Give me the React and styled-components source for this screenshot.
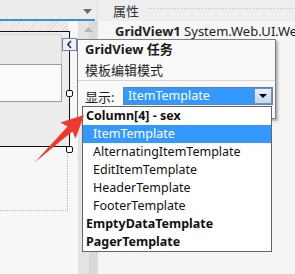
import React from 'react';
import styled, { createGlobalStyle } from 'styled-components';

const GlobalStyle = createGlobalStyle`
  html, body {
    margin: 0;
    padding: 0;
    background: #f0f0f0;
  }
  body {
    font-family: "Noto Sans", "Noto Sans CJK SC", sans-serif;
    font-size: 12.5px;
    color: #1e1e1e;
  }
`;

const templates = [
  { name: 'Column[4] - sex', bold: true },
  { name: 'ItemTemplate', selected: true },
  { name: 'AlternatingItemTemplate' },
  { name: 'EditItemTemplate' },
  { name: 'HeaderTemplate' },
  { name: 'FooterTemplate' },
  { name: 'EmptyDataTemplate', bold: true },
  { name: 'PagerTemplate', bold: true },
];

export default function App() {
  return (
    <Screen>
      <GlobalStyle />
      <DesignPane>
        <TabStrip>
          <svg width="9" height="5" viewBox="0 0 9 5">
            <path d="M0 0h9L4.5 5z" fill="#6b6b6b" />
          </svg>
        </TabStrip>
        <BlueBar />
        <DesignBody>
          <Surface>
            <Hatch />
            <ControlBox>
              <HeaderBand />
              <Cell />
              <Handle top={58} />
              <Handle top={114} />
            </ControlBox>
            <DottedBox />
          </Surface>
          <ScrollBar>
            <svg width="9" height="5" viewBox="0 0 9 5">
              <path d="M0 5h9L4.5 0z" fill="#b4b4b4" />
            </svg>
          </ScrollBar>
        </DesignBody>
      </DesignPane>

      <PropsPane>
        <PropsHeader>
          <span>属性</span>
          <Gripper />
        </PropsHeader>
        <ObjectRow>
          <b>GridView1</b>&nbsp;System.Web.UI.WebC
        </ObjectRow>
        <PropsBody />
      </PropsPane>

      <SmartTag>
        <svg width="7" height="9" viewBox="0 0 7 9">
          <path d="M5 1L1.8 4.5L5 8" stroke="#222" strokeWidth="1.4" fill="none" />
        </svg>
      </SmartTag>

      <TaskPanel>
        <PanelTitle>GridView 任务</PanelTitle>
        <PanelText>模板编辑模式</PanelText>
        <Separator />
        <ShowRow>
          <Label>显示:</Label>
          <Combo>
            <ComboValue>ItemTemplate</ComboValue>
            <ComboButton>
              <svg width="8" height="4" viewBox="0 0 8 4">
                <path d="M0 0h8L4 4z" fill="#000" />
              </svg>
            </ComboButton>
          </Combo>
        </ShowRow>
      </TaskPanel>

      <TemplateList>
        {templates.map((t) => (
          <ListItem key={t.name} bold={t.bold} selected={t.selected}>
            {t.name}
          </ListItem>
        ))}
      </TemplateList>

      <Arrow width="295" height="274" viewBox="0 0 295 274">
        <path
          d="M84 115L60.4 122.6L67.6 126.6L34.5 162.5L72.4 131.4L75.6 138.4Z"
          fill="#ec3a2e"
        />
      </Arrow>
    </Screen>
  );
}

const Screen = styled.div`
  position: relative;
  width: 295px;
  height: 274px;
  overflow: hidden;
  display: flex;
  background: #f0f0f0;
`;

const DesignPane = styled.div`
  width: 97px;
  display: flex;
  flex-direction: column;
  background: #f2f2f2;
`;

const TabStrip = styled.div`
  height: 19px;
  display: flex;
  align-items: center;
  justify-content: flex-end;
  padding: 3px 5px 0 0;
  box-sizing: border-box;
  background: #ededed;
`;

const BlueBar = styled.div`
  height: 2px;
  background: #3c8edc;
  margin-right: 2px;
`;

const DesignBody = styled.div`
  flex: 1;
  display: flex;
`;

const Surface = styled.div`
  width: 78px;
  display: flex;
  flex-direction: column;
  background: #f7f7f7;
`;

const Hatch = styled.div`
  height: 10px;
  margin-right: 10px;
  background: repeating-linear-gradient(
    135deg,
    #f3eeee 0 2px,
    #e6d9d9 2px 3px
  );
`;

const ControlBox = styled.div`
  position: relative;
  width: 70px;
  height: 116px;
  box-sizing: border-box;
  border-top: 1px solid #111;
  border-right: 1px solid #111;
  border-bottom: 1px solid #111;
  background: #ececec;
  display: flex;
  flex-direction: column;
`;

const HeaderBand = styled.div`
  height: 30px;
  width: 62px;
  box-sizing: border-box;
  margin-top: 2px;
  border-top: 1px solid #d4d4d4;
  border-right: 1px solid #c8c8c8;
  background: #ebebeb;
`;

const Cell = styled.div`
  width: 62px;
  height: 38px;
  box-sizing: border-box;
  border-top: 1px solid #9a9a9a;
  border-right: 1px solid #9a9a9a;
  border-bottom: 1px solid #9a9a9a;
  background: #fbfbfb;
`;

const Handle = styled.div`
  position: absolute;
  right: -4px;
  top: ${(p) => p.top}px;
  width: 5px;
  height: 5px;
  border: 1px solid #111;
  border-radius: 2px;
  background: #fff;
`;

const DottedBox = styled.div`
  width: 68px;
  height: 64px;
  box-sizing: border-box;
  border-right: 1px dotted #bdbdbd;
  border-bottom: 1px dotted #bdbdbd;
`;

const ScrollBar = styled.div`
  flex: 1;
  display: flex;
  justify-content: center;
  padding-top: 6px;
  background: linear-gradient(90deg, #e4e4e4 0 55%, #d9d9d9 55% 100%);
  border-left: 1px solid #e0e0e0;
`;

const PropsPane = styled.div`
  flex: 1;
  min-width: 0;
  display: flex;
  flex-direction: column;
  background: #f3f3f3;
  border-left: 1px solid #dcdcdc;
`;

const PropsHeader = styled.div`
  height: 21px;
  display: flex;
  align-items: center;
  gap: 8px;
  padding: 0 0 0 15px;
  font-size: 13px;
  color: #333;
  background: #eeeef0;
`;

const Gripper = styled.div`
  flex: 1;
  height: 4px;
  margin-top: -3px;
  background-image: radial-gradient(#b8b8b8 0.6px, transparent 0.8px);
  background-size: 3px 3px;
`;

const ObjectRow = styled.div`
  height: 21px;
  padding-left: 17px;
  white-space: nowrap;
  overflow: hidden;
  font-size: 13px;
  line-height: 21px;
  color: #222;
  background: #f6f6f6;
`;

const PropsBody = styled.div`
  flex: 1;
  background: #f4f4f4;
`;

const SmartTag = styled.div`
  position: absolute;
  left: 62px;
  top: 38px;
  width: 13px;
  height: 11px;
  display: flex;
  align-items: center;
  justify-content: center;
  border: 1px solid #6f7fae;
  background: #eef0f7;
`;

const TaskPanel = styled.div`
  position: absolute;
  left: 77px;
  top: 39px;
  width: 199px;
  height: 80px;
  box-sizing: border-box;
  padding: 0 0 0 7px;
  border: 1px solid #7d7d7d;
  background: #f9f9f9;
  box-shadow: 2px 2px 2px rgba(0, 0, 0, 0.28);
  display: flex;
  flex-direction: column;
`;

const PanelTitle = styled.div`
  height: 18px;
  line-height: 18px;
  font-weight: bold;
  font-size: 13px;
  color: #1a1a1a;
`;

const PanelText = styled.div`
  height: 18px;
  line-height: 18px;
  margin-top: 3px;
  font-size: 13px;
`;

const Separator = styled.div`
  height: 1px;
  margin: 1px 0 0 -7px;
  background: #d8d8d8;
`;

const ShowRow = styled.div`
  display: flex;
  align-items: center;
  margin-top: 6px;
  height: 18px;
`;

const Label = styled.div`
  width: 38px;
  font-size: 13px;
`;

const Combo = styled.div`
  width: 150px;
  height: 18px;
  box-sizing: border-box;
  border: 1px solid #5b86c6;
  background: #3399ff;
  display: flex;
  align-items: stretch;
`;

const ComboValue = styled.div`
  flex: 1;
  padding-left: 4px;
  line-height: 16px;
  color: #fff;
  font-size: 12.5px;
`;

const ComboButton = styled.div`
  width: 16px;
  display: flex;
  align-items: center;
  justify-content: center;
  border: 1px solid #6f8fbf;
  background: linear-gradient(#e4eefa, #c4d8f1);
`;

const TemplateList = styled.div`
  position: absolute;
  left: 82px;
  top: 106px;
  width: 190px;
  box-sizing: border-box;
  border: 1px solid #646464;
  background: #fff;
  display: flex;
  flex-direction: column;
`;

const ListItem = styled.div`
  height: 18px;
  line-height: 18px;
  white-space: nowrap;
  padding-left: ${(p) => (p.bold ? 3 : 10)}px;
  font-weight: ${(p) => (p.bold ? 'bold' : 'normal')};
  background: ${(p) => (p.selected ? '#3399ff' : 'transparent')};
  color: ${(p) => (p.selected ? '#fff' : '#111')};
`;

const Arrow = styled.svg`
  position: absolute;
  left: 0;
  top: 0;
  pointer-events: none;
`;
